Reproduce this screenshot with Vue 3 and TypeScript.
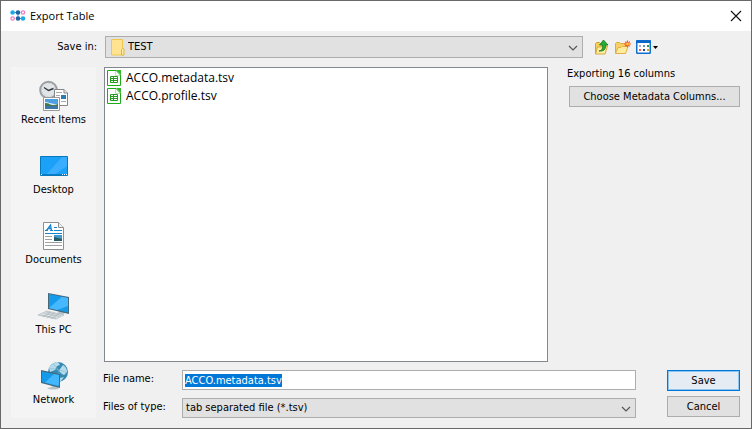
<script setup lang="ts">
import { onMounted, ref } from 'vue'

interface Place {
  id: string
  label: string
}

const places: Place[] = [
  { id: 'recent', label: 'Recent Items' },
  { id: 'desktop', label: 'Desktop' },
  { id: 'documents', label: 'Documents' },
  { id: 'pc', label: 'This PC' },
  { id: 'network', label: 'Network' },
]
const files: string[] = ['ACCO.metadata.tsv', 'ACCO.profile.tsv']

const folder = ref('TEST')
const fileName = ref('ACCO.metadata.tsv')
const fileType = ref('tab separated file (*.tsv)')
const nameInput = ref<HTMLInputElement | null>(null)

onMounted(() => {
  nameInput.value?.focus()
  nameInput.value?.select()
})
</script>

<template>
  <main class="dialog">
    <header class="titlebar">
      <svg class="logo" width="16" height="12" viewBox="0 0 16 12" aria-hidden="true">
        <path d="M2.600 2.500H8M8 8.500h5M8 2.500v6" stroke="#3487c5" stroke-width=".8" />
        <circle cx="2.600" cy="2.500" r="2.300" fill="#1fa9e4" />
        <circle cx="8" cy="2.500" r="2.300" fill="#1c64a5" />
        <circle cx="13" cy="2.500" r="1.700" fill="#fff" stroke="#ee7cc0" stroke-width="1.200" />
        <circle cx="2.600" cy="8.500" r="1.700" fill="#fff" stroke="#ee7cc0" stroke-width="1.200" />
        <circle cx="8" cy="8.500" r="2.300" fill="#1c64a5" />
        <circle cx="13" cy="8.500" r="2.300" fill="#1fa9e4" />
      </svg>
      <h1 class="title">Export Table</h1>
      <button class="close" type="button" aria-label="Close">
        <svg width="12" height="12" viewBox="0 0 12 12"><path d="M1 1l10 10M11 1L1 11" stroke="#111" stroke-width="1.100" /></svg>
      </button>
    </header>

    <div class="location">
      <label class="location-label" for="folder">Save in:</label>
      <div class="combo folder-combo">
        <svg class="folder-icon" width="14" height="17" viewBox="0 0 14 17" aria-hidden="true">
          <path d="M.5.5h11V16H.5z" fill="#ffe391" stroke="#efc74f" />
          <path d="M10.500 16v-5.500l1-1h1l.5.5v6z" fill="#ffe9a8" stroke="#e5b535" />
        </svg>
        <select id="folder" v-model="folder"><option>TEST</option></select>
        <svg class="chevron" width="10" height="6" viewBox="0 0 10 6" aria-hidden="true"><path d="M1 1l4 4 4-4" fill="none" stroke="#555" stroke-width="1.200" /></svg>
      </div>
      <div class="tools">
        <button class="tool" type="button" aria-label="Up one level">
          <svg width="16" height="16" viewBox="0 0 16 16">
            <path d="M1.500 14.500V4.500l1-1h3l1 1h4v10z" fill="#f5cf5b" stroke="#d3a12c" />
            <path d="M1.500 15l2-7h4l1-1h5l-2.500 8z" fill="#ffee9d" stroke="#d7a83a" />
            <path d="M5 12c3-.5 4-2.500 3.500-6H5.500L9.500 1l4.500 5h-2.500c.5 4.500-2 6.500-6.500 6z" fill="#25ae32" stroke="#177a25" stroke-width=".8" />
          </svg>
        </button>
        <button class="tool" type="button" aria-label="New folder">
          <svg width="16" height="16" viewBox="0 0 16 16">
            <path d="M.5 14V4.500l1-1h3l1 1h5V14z" fill="#f6d067" stroke="#dcab39" />
            <path d="M.5 14.500l2.500-6h3l1-1h6l-2.500 7z" fill="#ffed9d" stroke="#dfb04a" />
            <path d="M12.500 1.500v7M9 5h7M10.200 2.700l4.600 4.600M14.800 2.700l-4.600 4.600" stroke="#f05a31" stroke-width="1.200" />
            <circle cx="12.500" cy="5" r="1.300" fill="#ffd22e" />
          </svg>
        </button>
        <button class="tool view" type="button" aria-label="View menu">
          <svg width="22" height="14" viewBox="0 0 22 14">
            <rect x=".75" y=".75" width="13.500" height="12.500" rx=".6" fill="#fff" stroke="#1070d0" stroke-width="1.500" />
            <path d="M0 .5h15V3H0z" fill="#0867c9" />
            <path d="M3 5h2v2H3z" fill="#aaa9ca" /><path d="M7 5h2v2H7z" fill="#738cc2" /><path d="M11 5h2v2h-2z" fill="#239447" />
            <path d="M3 9h2v2H3z" fill="#ef6048" /><path d="M7 9h2v2H7z" fill="#1642a5" /><path d="M11 9h2v2h-2z" fill="#dca129" />
            <path d="M17 6h5l-2.500 3z" fill="#000" />
          </svg>
        </button>
      </div>
    </div>

    <div class="content">
      <nav class="places" aria-label="Places">
        <button v-for="p in places" :key="p.id" class="place" type="button">
          <svg v-if="p.id === 'recent'" width="32" height="32" viewBox="0 0 32 32" aria-hidden="true">
            <circle cx="10.500" cy="10" r="8.300" fill="#e2e5e7" stroke="#9ba0a3" stroke-width="2" />
            <circle cx="10.500" cy="10" r="6.700" fill="none" stroke="#bfc4c8" stroke-dasharray="1 2.500" />
            <path d="M6 7.500l4.500 3 5-2" fill="none" stroke="#30383d" stroke-width="1.400" />
            <path d="M16.500 9.500h9.500l3.500 3.500v12.500h-13z" fill="#fff" stroke="#858585" />
            <path d="M26 9.500V13h3.500" fill="#eee" stroke="#858585" />
            <path d="M18 12.500h6M18 15.500h4M18 18.500h4M23 21.500h5" stroke="#aaa" />
            <path d="M23 15h5v4h-5z" fill="#287cb8" />
            <path d="M5.500 17.500h16v13h-16z" fill="#fff" stroke="#999" />
            <path d="M7 19h13v10H7z" fill="#4e9fe0" /><path d="M7 22c4 0 5 2 13 2v2H7z" fill="#d2eafa" />
            <path d="M7 23c4 0 6 2 9 3H7zM13 26l7-2v3h-7z" fill="#47784b" /><path d="M7 26h13v3H7z" fill="#3d76a8" />
          </svg>
          <svg v-else-if="p.id === 'desktop'" width="32" height="32" viewBox="0 0 32 32" aria-hidden="true">
            <path d="M2.500 6.500h27v19h-27z" fill="#1ba1f7" stroke="#0878bd" />
            <path d="M29 7v9L16 25H8L24 7z" fill="#39adff" /><path d="M3 24h26v1H3z" fill="#087cc5" />
            <path d="M3 24.500h1M24 24.500h1M26 24.500h1M28 24.500h1" stroke="#fff" />
          </svg>
          <svg v-else-if="p.id === 'documents'" width="32" height="32" viewBox="0 0 32 32" aria-hidden="true">
            <path d="M5.500 2.500h15l5 5v22h-20z" fill="#fff" stroke="#8e8e8e" /><path d="M20.500 2.500v5h5" fill="#eee" stroke="#8e8e8e" />
            <path d="M8.500 10.500L12.500 5l1 5.500M10 8.500h3" fill="none" stroke="#1684cf" stroke-width="1.300" />
            <path d="M7 10.500h3M12 10.500h3M16 7.500h3M16 10.500h8M7 13.500h17" stroke="#1684cf" />
            <path d="M7 16.500h7M7 19.500h7M7 22.500h17M7 25.500h17" stroke="#a0a0a0" />
            <path d="M16 15h8v6h-8z" fill="#4298cc" /><path d="M16 17l8 2v2h-8z" fill="#275b65" />
          </svg>
          <svg v-else-if="p.id === 'pc'" width="32" height="32" viewBox="0 0 32 32" aria-hidden="true">
            <path d="M20 20h4l3 3c-1 2-8 2-8 0l2-1z" fill="#b7c2c9" />
            <path d="M10 3l21 4v17l-21-5z" fill="#476879" /><path d="M11 4l19 4v14.500l-19-4.500z" fill="#169bea" />
            <path d="M30 8v8L19 20l-8-2L24 6.700z" fill="#45b8ff" />
            <path d="M0 25l9-4 17 4-8 4z" fill="#e1e5e7" stroke="#aeb8bd" stroke-width=".7" />
            <path d="M3 25l15 3M6 23.500l15 3M8 22l15 3.500M5 27l8-5M9 28l8-5M13 28.500l8-4.500" stroke="#a9b4ba" stroke-width=".7" />
          </svg>
          <svg v-else width="32" height="32" viewBox="0 0 32 32" aria-hidden="true">
            <circle cx="20" cy="12" r="10" fill="#358ab3" />
            <path d="M11 8c2-4 6-6 9-6l2 3-3 1-2 4-5 2zM22 9l3-4c3 2 4 4 4 7l-3 3-2-1-3-3zM22 18l4-1-3 4-2 1z" fill="#b7dce9" />
            <path d="M14 4c5 2 8 7 8 18M11 9c6-1 12 1 18 4" fill="none" stroke="#77b7d2" stroke-width=".6" />
            <path d="M13 25l5 1 3 2c-1 2-10 2-12 0l5-1z" fill="#b8c4ca" />
            <path d="M3 10l19 4v14L3 23z" fill="#456a7e" /><path d="M4 11.500l17 3.500v11.500L4 22z" fill="#1599e9" />
            <path d="M21 15v10l-2 .5-12-3L16 14z" fill="#43b7fd" />
          </svg>
          <span>{{ p.label }}</span>
        </button>
      </nav>

      <div class="workspace">
        <div class="browser">
          <ul class="files" aria-label="Files">
            <li v-for="name in files" :key="name" class="file">
              <svg width="14" height="16" viewBox="0 0 14 16" aria-hidden="true">
                <path d="M.5.5H9L13.500 5v10.500H.5z" fill="#fff" stroke="#1faa18" />
                <path d="M9 0h5v5z" fill="#36b52d" /><path d="M8.500 1v4.500H13" fill="none" stroke="#b7e6b3" />
                <path d="M3.500 6.500h7v6h-7zM3.500 8.500h7M3.500 10.500h7M6.500 6.500v6" fill="none" stroke="#239d1d" />
              </svg>
              <span>{{ name }}</span>
            </li>
          </ul>
          <aside class="options">
            <p class="summary">Exporting 16 columns</p>
            <button class="push" type="button">Choose Metadata Columns...</button>
          </aside>
        </div>

        <form class="form" @submit.prevent>
          <div class="fields">
            <label for="name">File name:</label>
            <input id="name" ref="nameInput" v-model="fileName" type="text" spellcheck="false" autocomplete="off" />
            <label for="type">Files of type:</label>
            <div class="combo">
              <select id="type" v-model="fileType"><option>tab separated file (*.tsv)</option></select>
              <svg class="chevron" width="10" height="6" viewBox="0 0 10 6" aria-hidden="true"><path d="M1 1l4 4 4-4" fill="none" stroke="#555" stroke-width="1.200" /></svg>
            </div>
          </div>
          <div class="actions">
            <button class="push primary" type="submit">Save</button>
            <button class="push" type="button">Cancel</button>
          </div>
        </form>
      </div>
    </div>
  </main>
</template>

<style>
body { margin: 0; background: #f0f0f0; }
</style>

<style scoped>
* { box-sizing: border-box; }
.dialog {
  display: flex;
  flex-direction: column;
  min-height: 100vh;
  border: 1px solid #686868;
  background: #f0f0f0;
  color: #000;
  font-family: "DejaVu Sans Condensed", "DejaVu Sans", sans-serif;
  font-stretch: condensed;
  font-size: 11px;
  line-height: 14px;
}
button, input, select { margin: 0; color: inherit; font: inherit; border-radius: 0; }
button { padding: 0; border: 0; background: none; }
svg { display: block; flex: none; }
.titlebar { display: flex; align-items: center; height: 30px; padding-left: 9px; background: #fff; }
.title { flex: 1; margin: 0 0 0 4px; font: 400 11px/16px "Open Sans", "Noto Sans", sans-serif; }
.close { display: grid; place-items: center; width: 30px; height: 30px; }
.location { display: flex; align-items: center; padding: 5px 0 9px 10px; }
.location-label { width: 94px; padding-right: 8px; text-align: right; }
.combo { position: relative; display: flex; min-width: 0; }
.folder-combo { flex: 1; }
.combo select {
  width: 100%;
  height: 20px;
  padding: 0 24px 0 3px;
  border: 1px solid #adadad;
  appearance: none;
  background: #e1e1e1;
  outline: none;
}
.folder-combo select { height: 22px; padding-left: 22px; }
.folder-icon { position: absolute; left: 6px; top: 3px; }
.chevron { position: absolute; right: 5px; top: 50%; margin-top: -2px; pointer-events: none; }
.tools { display: flex; align-items: center; gap: 5px; width: 168px; padding-left: 11px; }
.tool { display: grid; place-items: center; width: 16px; height: 22px; }
.view { width: 22px; }
.content { display: flex; flex: 1; padding: 0 11px 10px 10px; }
.places { display: flex; flex-direction: column; gap: 22px; flex: none; width: 85px; padding-top: 13px; background: #f4f4f4; }
.place { display: flex; flex-direction: column; align-items: center; line-height: 16px; white-space: nowrap; }
.workspace { display: flex; flex: 1; flex-direction: column; min-width: 0; padding-left: 7px; }
.browser { display: flex; flex: 1; padding-left: 1px; }
.files { flex: 1; margin: 0; padding: 1px 2px; border: 1px solid #828790; background: #fff; list-style: none; }
.file { display: flex; align-items: center; gap: 5px; height: 18px; font: 12px/18px "Open Sans", "Noto Sans", sans-serif; }
.options { width: 192px; padding-left: 21px; }
.summary { margin: 0 0 5px -2px; }
.push { display: block; width: 100%; height: 21px; border: 1px solid #adadad; background: #e1e1e1; text-align: center; }
.form { display: flex; padding-top: 8px; }
.fields { display: grid; flex: 1; grid-template-columns: 79px 1fr; row-gap: 8px; align-items: start; }
.fields label { padding-top: 2px; }
.fields input { width: 100%; min-width: 0; height: 20px; padding: 0 2px; border: 1px solid #adadad; background: #fff; outline: none; }
.fields input::selection { background: #0078d7; color: #fff; }
.actions { display: flex; flex-direction: column; gap: 5px; width: 104px; padding-left: 31px; }
.primary { border-color: #0078d7; background: #e5ecf3; box-shadow: inset 0 0 0 1px #8cc5f2; }
</style>
